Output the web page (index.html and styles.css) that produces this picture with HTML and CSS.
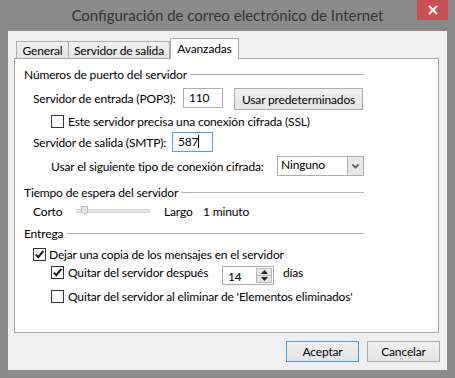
FILE: index.html
```html
<!DOCTYPE html>
<html>
<head>
    <meta charset="UTF-8">
    <title>Configuración de correo electrónico de Internet</title>
    <link rel="stylesheet" href="styles.css">
</head>
<body>
    <div class="window">
        <div class="titlebar">
            <span></span>
            <span class="title">Configuración de correo electrónico de Internet</span>
            <span class="close">
                <svg width="10" height="10" viewBox="0 0 10 10"><path d="M1 1 L9 9 M9 1 L1 9" stroke="#fff" stroke-width="2"/></svg>
            </span>
        </div>

        <div class="client">
            <div class="tabs">
                <div class="tab tab-general">General</div>
                <div class="tab tab-salida">Servidor de salida</div>
                <div class="tab tab-active">Avanzadas</div>
            </div>

            <div class="panel">
                <div class="group-title"><span>Números de puerto del servidor</span></div>

                <div class="row row-pop3">
                    <span class="lbl-pop3">Servidor de entrada (POP3):</span>
                    <div class="textbox tb-pop3">110</div>
                    <button class="btn btn-defaults">Usar predeterminados</button>
                </div>

                <div class="row row-ssl">
                    <span class="checkbox"></span>
                    <span>Este servidor precisa una conexión cifrada (SSL)</span>
                </div>

                <div class="row row-smtp">
                    <span class="lbl-smtp">Servidor de salida (SMTP):</span>
                    <div class="textbox tb-smtp focused">587<span class="caret"></span></div>
                </div>

                <div class="row row-enc">
                    <span class="lbl-enc">Usar el siguiente tipo de conexión cifrada:</span>
                    <div class="select">
                        <span class="select-value">Ninguno</span>
                        <span class="select-arrow">
                            <svg width="7" height="5" viewBox="0 0 7 5"><path d="M0.5 0.5 L3.5 3.5 L6.5 0.5" stroke="#555" stroke-width="1.6" fill="none"/></svg>
                        </span>
                    </div>
                </div>

                <div class="group-title group-timeout"><span>Tiempo de espera del servidor</span></div>

                <div class="row row-slider">
                    <span class="lbl-corto">Corto</span>
                    <div class="slider">
                        <div class="slider-track"></div>
                        <svg class="slider-thumb" width="7" height="9" viewBox="0 0 7 9"><path d="M0.5 0.5 H6.5 V6 L3.5 8.5 L0.5 6 Z" fill="#e3e3e3" stroke="#b9b9b9"/></svg>
                    </div>
                    <span class="lbl-largo">Largo</span>
                    <span>1 minuto</span>
                </div>

                <div class="group-title group-entrega"><span>Entrega</span></div>

                <div class="row row-cb1">
                    <span class="checkbox checked">
                        <svg width="11" height="11" viewBox="0 0 11 11"><path d="M1.8 5.6 L4.3 8.2 L9.3 1.8" stroke="#111" stroke-width="1.9" fill="none"/></svg>
                    </span>
                    <span>Dejar una copia de los mensajes en el servidor</span>
                </div>

                <div class="row row-cb2">
                    <span class="checkbox checked">
                        <svg width="11" height="11" viewBox="0 0 11 11"><path d="M1.8 5.6 L4.3 8.2 L9.3 1.8" stroke="#111" stroke-width="1.9" fill="none"/></svg>
                    </span>
                    <span class="lbl-quitar">Quitar del servidor después</span>
                    <div class="spinner">
                        <span class="spinner-value">14</span>
                        <div class="spin-buttons">
                            <span class="spin-btn">
                                <svg width="7" height="4" viewBox="0 0 7 4"><path d="M0 4 L3.5 0 L7 4 Z" fill="#222"/></svg>
                            </span>
                            <span class="spin-btn">
                                <svg width="7" height="4" viewBox="0 0 7 4"><path d="M0 0 L3.5 4 L7 0 Z" fill="#222"/></svg>
                            </span>
                        </div>
                    </div>
                    <span class="lbl-dias">días</span>
                </div>

                <div class="row row-cb3">
                    <span class="checkbox"></span>
                    <span>Quitar del servidor al eliminar de 'Elementos eliminados'</span>
                </div>
            </div>

            <div class="actions">
                <button class="btn btn-dialog btn-ok">Aceptar</button>
                <button class="btn btn-dialog">Cancelar</button>
            </div>
        </div>
    </div>
</body>
</html>
```

FILE: styles.css
```css
* {
    box-sizing: border-box;
}

body {
    margin: 0;
    padding: 0;
    font-family: Lato, "Noto Sans", sans-serif;
    font-size: 12px;
    letter-spacing: -0.15px;
    color: #000;
    background: #8a8a8a;
}

.window {
    width: 455px;
    height: 378px;
    background: #8a8a8a;
}

.titlebar {
    height: 31px;
    display: grid;
    grid-template-columns: 38px 1fr 38px;
}

.title {
    text-align: center;
    font-size: 15px;
    letter-spacing: 0;
    line-height: 30px;
    color: #333;
}

.close {
    width: 31px;
    height: 20px;
    background: #c75050;
    display: flex;
    align-items: center;
    justify-content: center;
}

.client {
    margin: 0 8px;
    height: 339px;
    background: #f0f0f0;
    padding: 7px 9px 0 6px;
}

/* tabs */
.tabs {
    display: flex;
    align-items: flex-end;
    height: 20px;
    padding-left: 2px;
}

.tab {
    height: 17px;
    border: 1px solid #acacac;
    border-bottom: none;
    background: linear-gradient(#f0f0f0, #e5e5e5);
    text-align: center;
    line-height: 17px;
}

.tab-general {
    width: 53px;
    margin-right: -1px;
}

.tab-salida {
    width: 102px;
}

.tab-active {
    width: 69px;
    height: 21px;
    margin-bottom: -1px;
    background: #fff;
    line-height: 19px;
    position: relative;
    z-index: 1;
}

.panel {
    width: 425px;
    height: 275px;
    background: #fff;
    border: 1px solid #a5a5a5;
    padding: 7px 0 0 9px;
}

/* group headings */
.group-title {
    width: 340px;
    height: 16px;
    display: flex;
    align-items: center;
}

.group-title::after {
    content: "";
    flex: 1;
    height: 1px;
    margin-left: 3px;
    background: #b4b4b4;
}

.group-timeout {
    margin-top: 8px;
}

.group-entrega {
    margin-top: 5px;
}

/* rows */
.row {
    display: flex;
    align-items: center;
}

.row-pop3 {
    height: 22px;
    margin-top: 6px;
    padding-left: 9px;
    align-items: flex-start;
    line-height: 21px;
}

.lbl-pop3 {
    width: 150px;
}

.textbox {
    height: 20px;
    border: 1px solid #abadb3;
    background: #fff;
    padding-left: 5px;
    line-height: 18px;
}

.tb-pop3 {
    width: 40px;
}

.tb-smtp {
    width: 41px;
}

.focused {
    border-color: #569de5;
}

.caret {
    display: inline-block;
    width: 1px;
    height: 13px;
    background: #000;
    vertical-align: -2px;
}

.btn {
    font-family: inherit;
    font-size: 12px;
    letter-spacing: inherit;
    color: #000;
    background: linear-gradient(#f0f0f0, #e5e5e5);
    border: 1px solid #acacac;
    padding: 0;
}

.btn-defaults {
    width: 129px;
    height: 22px;
    margin-left: 11px;
}

.row-ssl {
    height: 13px;
    margin-top: 5px;
    padding-left: 27px;
}

.checkbox {
    width: 13px;
    height: 13px;
    border: 1px solid #333;
    background: #fff;
    margin-right: 4px;
    flex-shrink: 0;
    display: flex;
    align-items: center;
    justify-content: center;
}

.row-smtp {
    height: 20px;
    margin-top: 4px;
    padding-left: 9px;
}

.lbl-smtp {
    width: 139px;
}

.row-enc {
    height: 20px;
    margin-top: 4px;
    padding-left: 27px;
}

.lbl-enc {
    width: 226px;
}

.select {
    width: 87px;
    height: 20px;
    border: 1px solid #acacac;
    background: #fff;
    display: flex;
    align-items: center;
    justify-content: space-between;
    padding: 0 0 0 3px;
}

.select-value {
    line-height: 16px;
    margin-top: -3px;
}

.select-arrow {
    width: 16px;
    height: 18px;
    border-left: 1px solid #acacac;
    background: #e8e8e8;
    display: flex;
    align-items: center;
    justify-content: center;
}

/* timeout slider */
.row-slider {
    height: 17px;
    margin-top: 3px;
    padding-left: 9px;
}

.lbl-corto {
    width: 43px;
}

.slider {
    width: 74px;
    height: 17px;
    display: flex;
    align-items: center;
    position: relative;
}

.slider-track {
    width: 74px;
    height: 4px;
    background: #e7e7e7;
    border: 1px solid #d6d6d6;
    margin-top: -2px;
}

.slider-thumb {
    position: absolute;
    left: 5px;
    top: 3px;
}

.lbl-largo {
    width: 39px;
    margin-left: 14px;
}

/* delivery options */
.row-cb1 {
    height: 13px;
    margin-top: 7px;
    padding-left: 9px;
}

.row-cb1 .checkbox {
    margin-right: 3px;
}

.row-cb2 {
    height: 20px;
    margin-top: 5px;
    padding-left: 27px;
    align-items: flex-start;
}

.lbl-quitar {
    width: 154px;
    line-height: 13px;
}

.spinner {
    width: 52px;
    height: 19px;
    border: 1px solid #abadb3;
    background: #fff;
    display: flex;
    justify-content: space-between;
    padding: 1px 1px 1px 5px;
}

.spinner-value {
    line-height: 17px;
}

.spin-buttons {
    width: 16px;
    display: flex;
    flex-direction: column;
}

.spin-btn {
    flex: 1;
    background: #e5e5e5;
    border: 1px solid #b8b8b8;
    display: flex;
    align-items: center;
    justify-content: center;
}

.spin-btn + .spin-btn {
    border-top: none;
}

.lbl-dias {
    margin-left: 9px;
    line-height: 13px;
}

.row-cb3 {
    height: 13px;
    margin-top: 4px;
    padding-left: 27px;
}

/* dialog buttons */
.actions {
    display: flex;
    justify-content: flex-end;
    gap: 8px;
    margin-top: 8px;
    margin-right: -2px;
}

.btn-dialog {
    width: 73px;
    height: 21px;
}

.btn-ok {
    border-color: #4a9ae6;
}
```
